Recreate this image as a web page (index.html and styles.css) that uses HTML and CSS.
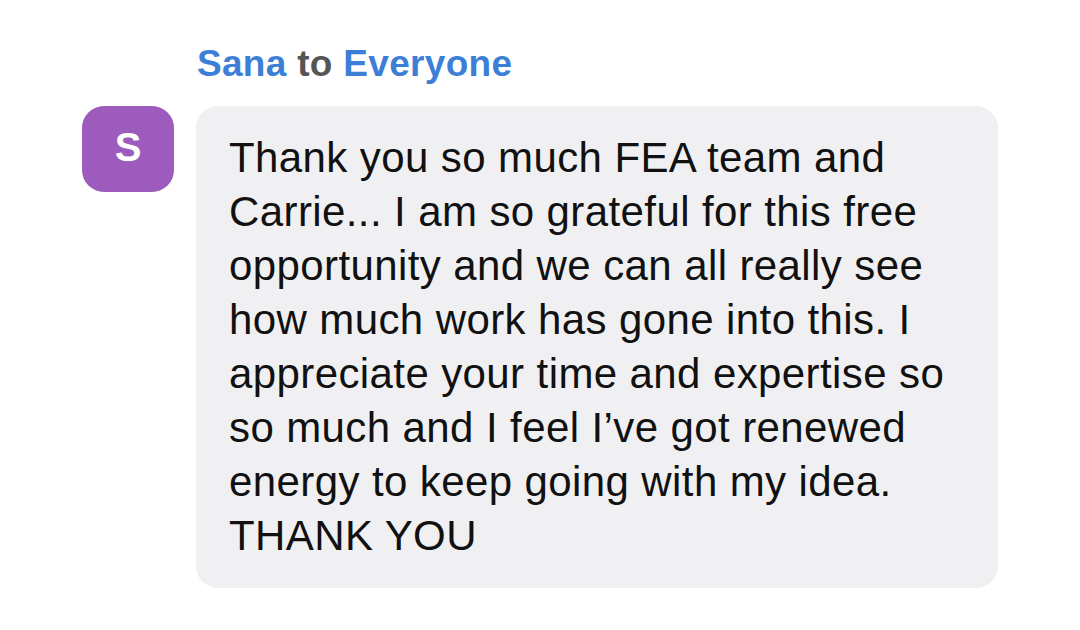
FILE: index.html
```html
<!DOCTYPE html>
<html>
<head>
<meta charset="utf-8">
<link rel="stylesheet" href="styles.css">
</head>
<body>
<div class="chat">
  <div class="meta"><span class="name">Sana</span> <span class="to">to</span> <span class="name">Everyone</span></div>
  <div class="row">
    <div class="avatar">S</div>
    <div class="bubble">Thank you so much FEA team and Carrie... I am so grateful for this free opportunity and we can all really see how much work has gone into this. I appreciate your time and expertise so so much and I feel I’ve got renewed energy to keep going with my idea. THANK YOU</div>
  </div>
</div>
</body>
</html>
```
FILE: styles.css
```css
html, body {
  margin: 0;
  padding: 0;
  background: #ffffff;
}
body {
  width: 1080px;
  height: 630px;
  overflow: hidden;
  font-family: "Liberation Sans", Arial, sans-serif;
}
.chat {
  padding: 41px 0 0 82px;
}
.meta {
  margin-left: 115px;
  font-size: 37px;
  font-weight: bold;
  letter-spacing: 0.3px;
  line-height: 46px;
  margin-bottom: 19px;
}
.name { color: #3d7fd6; }
.to { color: #555555; }
.row {
  display: flex;
  align-items: flex-start;
  gap: 22px;
}
.avatar {
  width: 92px;
  height: 86px;
  border-radius: 22px;
  background: #9d5cbd;
  color: #fff;
  font-weight: bold;
  font-size: 40px;
  display: flex;
  align-items: center;
  justify-content: center;
  padding-bottom: 4px;
  box-sizing: border-box;
  flex: none;
}
.bubble {
  width: 802px;
  box-sizing: border-box;
  background: #f0f0f2;
  border-radius: 22px;
  padding: 25px 26px 25px 33px;
  font-size: 42px;
  letter-spacing: 0.4px;
  line-height: 54px;
  color: #111111;
}
```
